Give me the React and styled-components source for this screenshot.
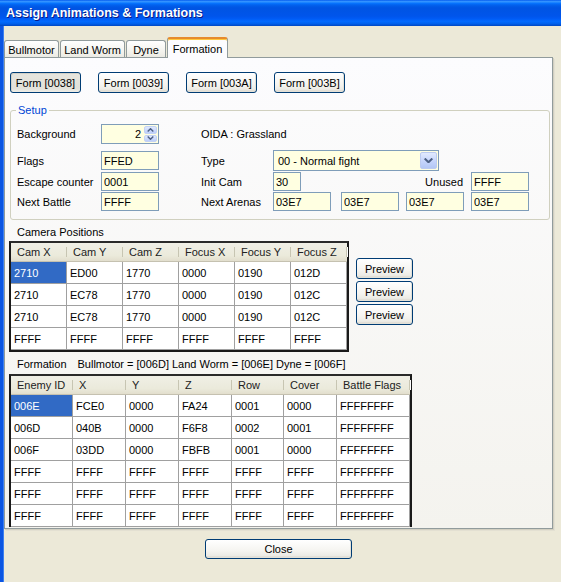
import React from "react";
import styled, { createGlobalStyle } from "styled-components";

const GlobalStyle = createGlobalStyle`
  html, body {
    margin: 0;
    padding: 0;
    background: #ece9d8;
  }
  body {
    font-family: "Liberation Sans", Arial, sans-serif;
    font-size: 11px;
    color: #000;
  }
  * {
    box-sizing: border-box;
  }
`;

const FONT = `11px "Liberation Sans", Arial, sans-serif`;

const Window = styled.div`
  width: 561px;
  height: 582px;
  display: flex;
  flex-direction: column;
  background: #ece9d8;
  overflow: hidden;
`;

const TitleBar = styled.div`
  flex: none;
  height: 26px;
  display: flex;
  align-items: center;
  padding: 0 0 0 6px;
  color: #fff;
  font: bold 12.5px "Liberation Sans", Arial, sans-serif;
  text-shadow: 1px 1px #0a1883;
  background: linear-gradient(
    to bottom,
    #0058ee 0%,
    #3593ff 5%,
    #288eff 8%,
    #127dff 11%,
    #036ffc 14%,
    #0262ee 19%,
    #0057e5 27%,
    #0054e3 32%,
    #0055eb 62%,
    #005bf5 72%,
    #026afe 82%,
    #0062ef 90%,
    #0052d6 96%,
    #0046c0 100%
  );
`;

const Body = styled.div`
  flex: 1;
  display: flex;
  border-left: 3px solid #0b55e2;
  box-shadow: inset 1px 0 #3c7ff0;
  padding: 11px 0 0 1px;
`;

const Column = styled.div`
  width: 549px;
  display: flex;
  flex-direction: column;
`;

const TabStrip = styled.div`
  height: 21px;
  display: flex;
  align-items: flex-end;
  gap: 1px;
  margin-bottom: -1px;
  position: relative;
  z-index: 1;
`;

const Tab = styled.div`
  width: ${(p) => p.$w}px;
  height: ${(p) => (p.$active ? 21 : 17)}px;
  margin-bottom: ${(p) => (p.$active ? 0 : 1)}px;
  display: flex;
  align-items: center;
  justify-content: center;
  border: 1px solid #919b9c;
  border-bottom: none;
  border-radius: 3px 3px 0 0;
  background: ${(p) =>
    p.$active ? "#fcfcfe" : "linear-gradient(#ffffff, #f3f2ec 70%, #ebeae3)"};
  ${(p) =>
    p.$active &&
    `border-top: 2px solid #e68b2c; box-shadow: inset 0 1px #ffc73c;`}
  padding-top: ${(p) => (p.$active ? 0 : 1)}px;
`;

const Panel = styled.div`
  height: 472px;
  display: flex;
  flex-direction: column;
  padding: 14px 0 0 4px;
  border: 1px solid #919b9c;
  background: linear-gradient(#fcfcfe, #f4f3ee);
  box-shadow: 1px 1px 0 #d2cfc1, 2px 2px 0 #e3e0d2;
  overflow: hidden;
`;

const ButtonRow = styled.div`
  display: flex;
  gap: 17px;
  margin-left: 1px;
`;

const Button = styled.button`
  width: ${(p) => p.$w}px;
  height: ${(p) => p.$h || 21}px;
  padding: 0;
  font: ${FONT};
  color: #000;
  border: 1px solid #003c74;
  border-radius: 3px;
  background: ${(p) =>
    p.$pressed
      ? "linear-gradient(#e6e5de, #e2e1da 80%, #eeede7)"
      : "linear-gradient(#ffffff, #f5f4f0 60%, #ecebe5 86%, #d6d0c5)"};
  box-shadow: ${(p) =>
    p.$pressed ? "inset 1px 1px #d1d0c8" : "inset -1px -1px #e3e1d8"};
  cursor: default;
`;

const GroupBox = styled.fieldset`
  width: 540px;
  margin: 11px 0 0 1px;
  padding: 7px 20px 8px 6px;
  border: 1px solid #d0d0bf;
  border-radius: 3px;
`;

const Legend = styled.legend`
  padding: 0 2px;
  margin-left: -1px;
  line-height: 13px;
  color: #0046d5;
`;

const Row = styled.div`
  display: flex;
  align-items: center;
  height: ${(p) => p.$h}px;
  margin-top: ${(p) => p.$mt || 0}px;
`;

const Label = styled.span`
  flex: none;
  width: ${(p) => (p.$w ? `${p.$w}px` : "auto")};
  margin-left: ${(p) => p.$ml || 0}px;
  margin-right: ${(p) => p.$mr || 0}px;
  white-space: nowrap;
`;

const Spacer = styled.div`
  flex: 1;
`;

const TextBox = styled.input`
  flex: none;
  width: ${(p) => p.$w}px;
  height: 19px;
  margin: 0 0 0 ${(p) => p.$ml || 0}px;
  padding: 0 0 0 2px;
  font: ${FONT};
  color: #000;
  border: 1px solid #7f9db9;
  background: #ffffe1;
  outline: none;
`;

const SpinBox = styled.div`
  flex: none;
  width: 58px;
  height: 20px;
  display: flex;
  border: 1px solid #7f9db9;
  background: #ffffe1;
`;

const SpinValue = styled.input`
  flex: 1;
  min-width: 0;
  border: none;
  background: transparent;
  font: ${FONT};
  text-align: right;
  padding: 0 3px 0 0;
  outline: none;
`;

const SpinButtons = styled.div`
  width: 14px;
  display: flex;
  flex-direction: column;
  gap: 1px;
  padding: 1px 1px 1px 0;
`;

const SpinButton = styled.div`
  flex: 1;
  display: flex;
  align-items: center;
  justify-content: center;
  border-radius: 2px;
  border: 1px solid #c3d2f4;
  background: linear-gradient(#dfe8fd, #bccefa);
`;

const Combo = styled.div`
  flex: none;
  width: 166px;
  height: 21px;
  display: flex;
  align-items: center;
  padding: 1px;
  border: 1px solid #7f9db9;
  background: #ffffe1;
`;

const ComboText = styled.span`
  flex: 1;
  padding-left: 3px;
`;

const ComboButton = styled.div`
  width: 17px;
  height: 17px;
  display: flex;
  align-items: center;
  justify-content: center;
  border: 1px solid #bccbf0;
  border-radius: 2px;
  background: linear-gradient(#e2eafe, #c3d3fb 60%, #b3c7f5);
`;

const SectionLabel = styled.div`
  display: flex;
  line-height: 13px;
  padding-left: 8px;
  margin-top: ${(p) => p.$mt}px;
`;

const Note = styled.span`
  margin-left: 11px;
`;

const GridArea = styled.div`
  display: flex;
  align-items: flex-start;
  gap: 7px;
  margin-top: ${(p) => p.$mt}px;
`;

const DataGrid = styled.div`
  display: grid;
  grid-template-columns: ${(p) => p.$cols.map((c) => `${c}px`).join(" ")};
  grid-template-rows: 19px;
  grid-auto-rows: 22px;
  border: 2px solid #1a1a1a;
  ${(p) => p.$open && "border-bottom: none;"}
  border-top-color: #2a2a2a;
  background: #fff;
`;

const HeaderCell = styled.div`
  position: relative;
  display: flex;
  align-items: center;
  padding-left: 6px;
  color: #222;
  white-space: nowrap;
  background: linear-gradient(#f0efe6, #ebeadb 70%, #e2decd);
  border-bottom: 1px solid #c5c1b0;
  &::after {
    content: "";
    position: absolute;
    right: 0;
    top: 4px;
    bottom: 4px;
    width: 1px;
    background: #c7c5b2;
    box-shadow: 1px 0 #fff;
  }
`;

const Cell = styled.div`
  display: flex;
  align-items: center;
  padding-left: 3px;
  white-space: nowrap;
  border-right: 1px solid #a0a0a0;
  border-bottom: 1px solid #a0a0a0;
  background: ${(p) => (p.$selected ? "#316ac5" : "#fff")};
  color: ${(p) => (p.$selected ? "#fff" : "#000")};
`;

const PreviewStack = styled.div`
  display: flex;
  flex-direction: column;
  gap: 2px;
  margin-top: 17px;
`;

const Footer = styled.div`
  display: flex;
  justify-content: center;
  margin-top: 10px;
`;

function Chevron({ up, w = 7, h = 4, stroke = 1.4 }) {
  const d = up
    ? `M0.7 ${h - 0.5} L${w / 2} 0.7 L${w - 0.7} ${h - 0.5}`
    : `M0.7 0.5 L${w / 2} ${h - 0.7} L${w - 0.7} 0.5`;
  return (
    <svg width={w} height={h} viewBox={`0 0 ${w} ${h}`}>
      <path d={d} fill="none" stroke="#4d6185" strokeWidth={stroke} />
    </svg>
  );
}

function Grid({ cols, headers, rows, open }) {
  return (
    <DataGrid $cols={cols} $open={open}>
      {headers.map((h) => (
        <HeaderCell key={h}>{h}</HeaderCell>
      ))}
      {rows.map((r, i) =>
        r.map((v, j) => (
          <Cell key={`${i}-${j}`} $selected={i === 0 && j === 0}>
            {v}
          </Cell>
        ))
      )}
    </DataGrid>
  );
}

const tabs = [
  { name: "Bullmotor", w: 55 },
  { name: "Land Worm", w: 65 },
  { name: "Dyne", w: 40 },
  { name: "Formation", w: 61, active: true },
];

const forms = ["0038", "0039", "003A", "003B"];

const camHeaders = ["Cam X", "Cam Y", "Cam Z", "Focus X", "Focus Y", "Focus Z"];
const camRows = [
  ["2710", "ED00", "1770", "0000", "0190", "012D"],
  ["2710", "EC78", "1770", "0000", "0190", "012C"],
  ["2710", "EC78", "1770", "0000", "0190", "012C"],
  ["FFFF", "FFFF", "FFFF", "FFFF", "FFFF", "FFFF"],
];

const enemyHeaders = ["Enemy ID", "X", "Y", "Z", "Row", "Cover", "Battle Flags"];
const emptyEnemy = ["FFFF", "FFFF", "FFFF", "FFFF", "FFFF", "FFFF", "FFFFFFFF"];
const enemyRows = [
  ["006E", "FCE0", "0000", "FA24", "0001", "0000", "FFFFFFFF"],
  ["006D", "040B", "0000", "F6F8", "0002", "0001", "FFFFFFFF"],
  ["006F", "03DD", "0000", "FBFB", "0001", "0000", "FFFFFFFF"],
  emptyEnemy,
  emptyEnemy,
  emptyEnemy,
];

export default function App() {
  return (
    <>
      <GlobalStyle />
      <Window>
        <TitleBar>Assign Animations &amp; Formations</TitleBar>
        <Body>
          <Column>
            <TabStrip>
              {tabs.map((t) => (
                <Tab key={t.name} $w={t.w} $active={t.active}>
                  {t.name}
                </Tab>
              ))}
            </TabStrip>
            <Panel>
              <ButtonRow>
                {forms.map((f, i) => (
                  <Button key={f} $w={71} $pressed={i === 0}>
                    Form [{f}]
                  </Button>
                ))}
              </ButtonRow>

              <GroupBox>
                <Legend>Setup</Legend>
                <Row $h={20}>
                  <Label $w={84}>Background</Label>
                  <SpinBox>
                    <SpinValue readOnly value="2" />
                    <SpinButtons>
                      <SpinButton>
                        <Chevron up />
                      </SpinButton>
                      <SpinButton>
                        <Chevron />
                      </SpinButton>
                    </SpinButtons>
                  </SpinBox>
                  <Label $ml={42}>OIDA : Grassland</Label>
                </Row>
                <Row $h={21} $mt={6}>
                  <Label $w={84}>Flags</Label>
                  <TextBox $w={58} readOnly value="FFED" />
                  <Label $w={72} $ml={42}>
                    Type
                  </Label>
                  <Combo>
                    <ComboText>00 - Normal fight</ComboText>
                    <ComboButton>
                      <Chevron w={9} h={5} stroke={2} />
                    </ComboButton>
                  </Combo>
                </Row>
                <Row $h={19} $mt={1}>
                  <Label $w={84}>Escape counter</Label>
                  <TextBox $w={58} readOnly value="0001" />
                  <Label $w={72} $ml={42}>
                    Init Cam
                  </Label>
                  <TextBox $w={28} readOnly value="30" />
                  <Spacer />
                  <Label $mr={8}>Unused</Label>
                  <TextBox $w={58} readOnly value="FFFF" />
                </Row>
                <Row $h={19} $mt={1}>
                  <Label $w={84}>Next Battle</Label>
                  <TextBox $w={58} readOnly value="FFFF" />
                  <Label $w={72} $ml={42}>
                    Next Arenas
                  </Label>
                  <TextBox $w={58} readOnly value="03E7" />
                  <TextBox $w={58} $ml={10} readOnly value="03E7" />
                  <TextBox $w={58} $ml={7} readOnly value="03E7" />
                  <TextBox $w={58} $ml={7} readOnly value="03E7" />
                </Row>
              </GroupBox>

              <SectionLabel $mt={6}>Camera Positions</SectionLabel>
              <GridArea $mt={2}>
                <Grid
                  cols={[56, 56, 56, 56, 56, 56]}
                  headers={camHeaders}
                  rows={camRows}
                />
                <PreviewStack>
                  {[0, 1, 2].map((i) => (
                    <Button key={i} $w={57}>
                      Preview
                    </Button>
                  ))}
                </PreviewStack>
              </GridArea>

              <SectionLabel $mt={6}>
                Formation
                <Note>Bullmotor = [006D] Land Worm = [006E] Dyne = [006F]</Note>
              </SectionLabel>
              <GridArea $mt={3}>
                <Grid
                  cols={[62, 53, 53, 53, 52, 53, 73]}
                  headers={enemyHeaders}
                  rows={enemyRows}
                  open
                />
              </GridArea>
            </Panel>
            <Footer>
              <Button $w={147} $h={20}>
                Close
              </Button>
            </Footer>
          </Column>
        </Body>
      </Window>
    </>
  );
}
